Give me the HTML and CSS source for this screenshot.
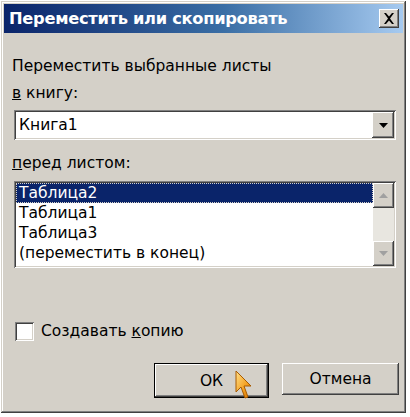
FILE: index.html
```html
<!DOCTYPE html>
<html lang="ru">
<head>
    <meta charset="UTF-8">
    <title>Переместить или скопировать</title>
    <link rel="stylesheet" href="styles.css">
</head>
<body>
    <div class="window">
        <div class="titlebar">
            <span class="title">Переместить или скопировать</span>
            <span class="close">
                <svg width="12" height="11" viewBox="0 0 12 11"><path d="M1 0h2l3 3.5L9 0h2L7 5.5 11 11H9L6 7.5 3 11H1l4-5.5z" fill="#000"/></svg>
            </span>
        </div>
        <div class="content">
            <div class="intro">Переместить выбранные листы</div>
            <div class="label"><u>в</u> книгу:</div>
            <div class="combo">
                <span class="combo-text">Книга1</span>
                <span class="btn3d arrow-btn">
                    <svg width="9" height="5" viewBox="0 0 9 5"><path d="M0 0h9L4.5 5z" fill="#000"/></svg>
                </span>
            </div>
            <div class="label label-list"><u>п</u>еред листом:</div>
            <div class="listbox">
                <div class="items">
                    <div class="item selected">Таблица2</div>
                    <div class="item">Таблица1</div>
                    <div class="item">Таблица3</div>
                    <div class="item">(переместить в конец)</div>
                </div>
                <div class="scrollbar">
                    <span class="btn3d scroll-btn">
                        <svg width="9" height="5" viewBox="0 0 9 5"><path d="M0 5h9L4.5 0z" fill="#a0a0a0"/></svg>
                    </span>
                    <span class="btn3d scroll-btn">
                        <svg width="9" height="5" viewBox="0 0 9 5"><path d="M0 0h9L4.5 5z" fill="#a0a0a0"/></svg>
                    </span>
                </div>
            </div>
            <label class="check">
                <span class="box"></span>
                <span>Создавать <u>к</u>опию</span>
            </label>
            <div class="buttons">
                <div class="default-frame">
                    <span class="btn3d button">ОК</span>
                </div>
                <span class="btn3d button cancel">Отмена</span>
                <svg class="cursor" width="18" height="30" viewBox="0 0 18 30">
                    <defs>
                        <linearGradient id="cg" x1="0" y1="0" x2="1" y2="1">
                            <stop offset="0" stop-color="#ffe08a"/>
                            <stop offset="0.6" stop-color="#f4a020"/>
                            <stop offset="1" stop-color="#c86a00"/>
                        </linearGradient>
                    </defs>
                    <path d="M1 1 L1 22 L6 17 L10 28 L13 27 L9 16 L16 16 Z" fill="url(#cg)" stroke="#a85a00" stroke-width="1"/>
                </svg>
            </div>
        </div>
    </div>
</body>
</html>
```

FILE: styles.css
```css
body {
    margin: 0;
    background-color: #ffffff;
    font-family: "DejaVu Sans", sans-serif;
    font-size: 15.5px;
    color: #000;
}
.window {
    width: 405px;
    height: 412px;
    margin: 1px 0 0 1px;
    padding: 3px;
    box-sizing: border-box;
    background-color: #d4d0c8;
    box-shadow: inset -1px -1px 0 #404040, inset 1px 1px 0 #d4d0c8, inset -2px -2px 0 #808080, inset 2px 2px 0 #ffffff;
}
.titlebar {
    height: 29px;
    display: flex;
    align-items: center;
    justify-content: space-between;
    padding: 0 4px 0 5px;
    background: linear-gradient(to right, #0a246a, #3a6ea5 55%, #a6caf0);
}
.title {
    color: #fff;
    font-weight: bold;
    font-size: 16.3px;
    letter-spacing: -0.3px;
}
.close {
    width: 20px;
    height: 19px;
    display: flex;
    align-items: center;
    justify-content: center;
    background-color: #d4d0c8;
    box-shadow: inset -1px -1px 0 #404040, inset 1px 1px 0 #ffffff, inset -2px -2px 0 #808080;
}
.content {
    padding: 0 7px 0 8px;
}
.intro {
    margin-top: 24px;
    height: 18px;
    line-height: 18px;
}
.label {
    margin-top: 9px;
    height: 18px;
    line-height: 18px;
}
.combo {
    margin: 8px 0 0 2px;
    height: 30px;
    display: flex;
    align-items: center;
    justify-content: space-between;
    padding: 2px 2px 2px 5px;
    box-sizing: border-box;
    background-color: #fff;
    box-shadow: inset 1px 1px 0 #808080, inset -1px -1px 0 #ffffff, inset 2px 2px 0 #404040, inset -2px -2px 0 #d4d0c8;
}
.btn3d {
    background-color: #d4d0c8;
    box-shadow: inset -1px -1px 0 #404040, inset 1px 1px 0 #ffffff, inset -2px -2px 0 #808080, inset 2px 2px 0 #d4d0c8;
    display: flex;
    align-items: center;
    justify-content: center;
}
.arrow-btn {
    width: 22px;
    height: 26px;
}
.label-list {
    margin-top: 14px;
}
.listbox {
    margin: 9px 0 0 2px;
    height: 87px;
    display: flex;
    padding: 2px;
    box-sizing: border-box;
    background-color: #fff;
    box-shadow: inset 1px 1px 0 #808080, inset -1px -1px 0 #ffffff, inset 2px 2px 0 #404040, inset -2px -2px 0 #d4d0c8;
}
.items {
    flex: 1;
}
.item {
    height: 20px;
    line-height: 20px;
    padding-left: 3px;
}
.selected {
    background-color: #0a246a;
    color: #fff;
    outline: 1px dotted #d4d0c8;
    outline-offset: -1px;
}
.scrollbar {
    width: 21px;
    display: flex;
    flex-direction: column;
    justify-content: space-between;
    background-color: #e8e6e0;
}
.scroll-btn {
    height: 25px;
}
.check {
    margin-top: 53px;
    display: flex;
    align-items: center;
    gap: 7px;
    height: 20px;
    padding-left: 3px;
}
.box {
    width: 19px;
    height: 19px;
    background-color: #fff;
    box-shadow: inset 1px 1px 0 #808080, inset -1px -1px 0 #ffffff, inset 2px 2px 0 #404040, inset -2px -2px 0 #d4d0c8;
}
.buttons {
    position: relative;
    margin: 22px -3px 0 0;
    display: flex;
    justify-content: flex-end;
    gap: 13px;
}
.default-frame {
    border: 1px solid #000;
}
.button {
    width: 113px;
    height: 33px;
}
.cancel {
    width: 117px;
    height: 32px;
}
.cursor {
    position: absolute;
    left: 223px;
    top: 7px;
}
```
